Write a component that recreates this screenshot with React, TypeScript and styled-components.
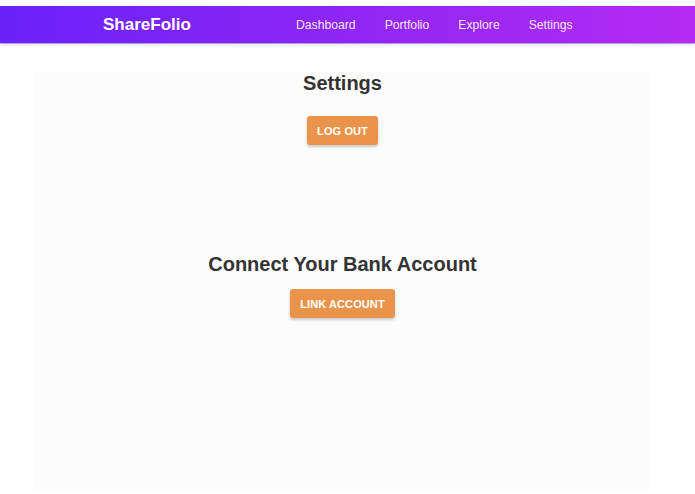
import React from "react";
import styled, { createGlobalStyle } from "styled-components";

const Global = createGlobalStyle`
  html, body { margin: 0; padding: 0; background: #ffffff; }
  body { font-family: "Liberation Sans", Arial, Helvetica, sans-serif; }
`;

const Page = styled.div`
  padding-top: 6px;
  min-height: 484px;
  display: flex;
  flex-direction: column;
`;

const NavBar = styled.header`
  height: 37px;
  background: linear-gradient(90deg, #6a22f8 0%, #8f26f4 50%, #b52bf3 100%);
  box-shadow: 0 2px 4px rgba(0, 0, 0, 0.12), 0 1px 0 rgba(160, 120, 250, 0.6);
  display: flex;
  align-items: center;
  padding-left: 103px;
`;

const Logo = styled.div`
  color: #ffffff;
  font-size: 17px;
  font-weight: 700;
  width: 193px;
`;

const Links = styled.nav`
  display: flex;
  gap: 29px;
`;

const NavLink = styled.a`
  color: rgba(255, 255, 255, 0.9);
  font-size: 12.2px;
  text-decoration: none;
`;

const Panel = styled.main`
  margin: 29px 0 0 35px;
  width: 615px;
  flex: 1;
  background: #fcfcfc;
  display: flex;
  flex-direction: column;
  align-items: center;
`;

const Section = styled.section<{ $top: number; $gap: number }>`
  display: flex;
  flex-direction: column;
  align-items: center;
  gap: ${(p) => p.$gap}px;
  margin-top: ${(p) => p.$top}px;
`;

const Heading = styled.h2`
  margin: 0;
  font-size: 20px;
  font-weight: 700;
  color: #333333;
  line-height: 24px;
`;

const Button = styled.button<{ $w: number }>`
  width: ${(p) => p.$w}px;
  height: 29px;
  border: none;
  border-radius: 3px;
  background: #e9944a;
  color: #ffffff;
  font-family: "Liberation Sans", Arial, sans-serif;
  font-size: 11px;
  font-weight: 700;
  letter-spacing: 0.1px;
  box-shadow: 0 2px 3px rgba(0, 0, 0, 0.2);
  padding: 0;
`;

export default function App() {
  return (
    <>
      <Global />
      <Page>
        <NavBar>
          <Logo>ShareFolio</Logo>
          <Links>
            <NavLink>Dashboard</NavLink>
            <NavLink>Portfolio</NavLink>
            <NavLink>Explore</NavLink>
            <NavLink>Settings</NavLink>
          </Links>
        </NavBar>
        <Panel>
          <Section $top={-1} $gap={21}>
            <Heading>Settings</Heading>
            <Button $w={71}>LOG OUT</Button>
          </Section>
          <Section $top={107} $gap={13}>
            <Heading>Connect Your Bank Account</Heading>
            <Button $w={105}>LINK ACCOUNT</Button>
          </Section>
        </Panel>
      </Page>
    </>
  );
}
